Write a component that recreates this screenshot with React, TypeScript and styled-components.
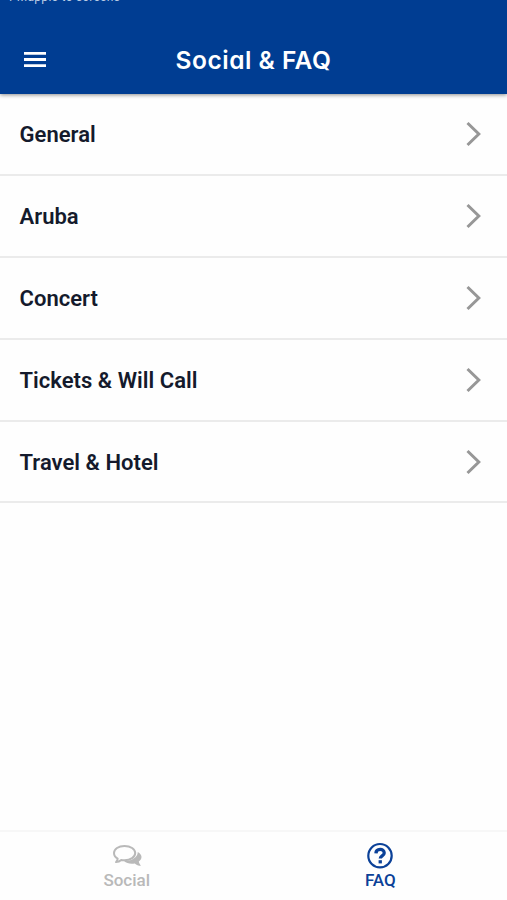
import React from "react";
import styled, { createGlobalStyle } from "styled-components";

const GlobalStyle = createGlobalStyle`
  * { box-sizing: border-box; }
  body { margin: 0; background: #fefefe; font-family: Roboto, sans-serif; }
`;

const Screen = styled.div`
  display: flex;
  flex-direction: column;
  height: 900px;
  overflow: hidden;
  background: #fefefe;
`;

const Header = styled.header`
  flex: none;
  height: 94px;
  background: #003d92;
  color: #fff;
  box-shadow: 0 1px 4px rgba(0, 0, 0, 0.45);
  z-index: 1;
`;

const StatusBar = styled.div`
  height: 26px;
  overflow: hidden;
  padding-left: 7px;
  font-size: 12px;
  line-height: 14px;
  color: #b9cbe4;
  white-space: pre;
`;

const StatusText = styled.div`
  margin-top: -10px;
  letter-spacing: 0.3px;
`;

const TitleBar = styled.div`
  display: grid;
  grid-template-columns: 70px 1fr 70px;
  align-items: center;
  height: 68px;
`;

const MenuButton = styled.button`
  display: flex;
  width: 70px;
  height: 48px;
  padding: 0;
  border: 0;
  background: none;
  color: #fff;
  align-items: center;
  justify-content: center;
`;

const Title = styled.h1`
  margin: 0;
  text-align: center;
  white-space: nowrap;
  font: 600 24.5px/36px Inter, sans-serif;
  letter-spacing: 0.5px;
  font-feature-settings: "cv11" 1;
`;

const List = styled.ul`
  flex: 1;
  margin: 0;
  padding: 0;
  list-style: none;
`;

const Row = styled.li`
  display: flex;
  align-items: center;
  justify-content: space-between;
  height: 81.9px;
  padding: 1px 25px 0 19.5px;
  border-bottom: 2px solid #ebebeb;
  color: #141a2c;
  font-size: 22px;
  font-weight: 600;
  letter-spacing: 0.03px;
`;

const Tabs = styled.nav`
  flex: none;
  display: flex;
  height: 70px;
  border-top: 2px solid #f7f7f7;
`;

const Tab = styled.button<{ $active?: boolean }>`
  flex: 1;
  display: flex;
  flex-direction: column;
  align-items: center;
  padding: 10px 0 0;
  border: 0;
  background: none;
  color: ${(p) => (p.$active ? "#0b4198" : "#b9b9b9")};
  font: 500 17px/20px Roboto, sans-serif;
`;

const IconBox = styled.span`
  display: flex;
  height: 28px;
`;

const topics = ["General", "Aruba", "Concert", "Tickets & Will Call", "Travel & Hotel"];

const Chevron = () => (
  <svg width="17" height="26" viewBox="0 0 17 26" fill="none" stroke="#979797" strokeWidth="3">
    <path d="M2.5 2L13.8 13L2.5 24" />
  </svg>
);

const MenuIcon = () => (
  <svg width="24" height="18" viewBox="0 0 24 18" fill="currentColor">
    <path d="M1 1h22v2.8H1zM1 7.1h22v2.8H1zM1 13.2h22v2.8H1z" />
  </svg>
);

const ChatIcon = () => (
  <svg width="32" height="28" viewBox="0 0 32 28">
    <path
      d="M26.8 10c2.2 1.2 3.7 3 3.7 5.1 0 1.8-1 3.3-2.7 4.5.2 1.6.9 2.6 2.1 4.2-2.5 0-4.5-.8-6.1-2.4-4.3.7-8.2 0-10.7-2.3C20.6 19.1 26.7 15.5 26.8 10z"
      fill="currentColor"
    />
    <path
      d="M13.5 3.9C7.4 3.9 3 7.1 3 11.1c0 2.2 1.4 4.3 3.7 5.5-.2 1.4-.8 2.6-1.7 3.5 2.1-.2 3.7-.8 5.2-2.2 1 .2 2.1.3 3.3.3 6.1 0 10.7-3.1 10.7-7.1s-4.6-7.2-10.7-7.2z"
      fill="none"
      stroke="currentColor"
      strokeWidth="2"
      strokeLinejoin="round"
    />
  </svg>
);

const HelpIcon = () => (
  <svg width="28" height="28" viewBox="0 0 28 28" fill="none" stroke="currentColor">
    <circle cx="14" cy="13.7" r="11.7" strokeWidth="2.2" />
    <path d="M9.9 11.3C10.2 6.1 18.2 6.2 18.2 10.9c0 3-3.9 3-3.9 5.6" strokeWidth="3.3" />
    <path d="M12.6 18.2h3.3v3.2h-3.3z" fill="currentColor" stroke="none" />
  </svg>
);

export default function App() {
  return (
    <Screen>
      <GlobalStyle />
      <Header>
        <StatusBar>
          <StatusText>T-Mapple to screens</StatusText>
        </StatusBar>
        <TitleBar>
          <MenuButton aria-label="Menu"><MenuIcon /></MenuButton>
          <Title>Social &amp; FAQ</Title>
        </TitleBar>
      </Header>
      <List>
        {topics.map((t) => (
          <Row key={t}>{t}<Chevron /></Row>
        ))}
      </List>
      <Tabs>
        <Tab><IconBox><ChatIcon /></IconBox>Social</Tab>
        <Tab $active><IconBox><HelpIcon /></IconBox>FAQ</Tab>
      </Tabs>
    </Screen>
  );
}
